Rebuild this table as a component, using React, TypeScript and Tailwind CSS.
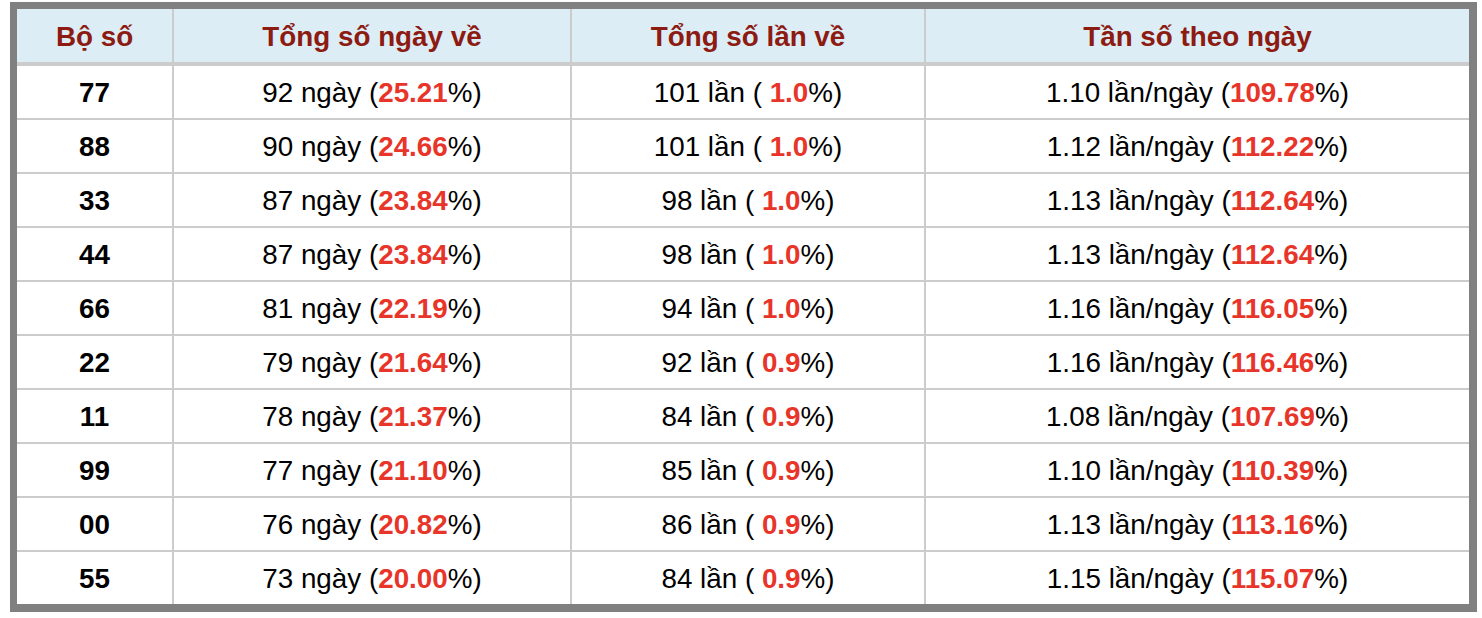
import React from "react";

type Row = {
  bo: string;
  ngay: string;
  ngayPct: string;
  lan: string;
  lanPct: string;
  tan: string;
  tanPct: string;
};

const rows: Row[] = [
  { bo: "77", ngay: "92", ngayPct: "25.21", lan: "101", lanPct: "1.0", tan: "1.10", tanPct: "109.78" },
  { bo: "88", ngay: "90", ngayPct: "24.66", lan: "101", lanPct: "1.0", tan: "1.12", tanPct: "112.22" },
  { bo: "33", ngay: "87", ngayPct: "23.84", lan: "98", lanPct: "1.0", tan: "1.13", tanPct: "112.64" },
  { bo: "44", ngay: "87", ngayPct: "23.84", lan: "98", lanPct: "1.0", tan: "1.13", tanPct: "112.64" },
  { bo: "66", ngay: "81", ngayPct: "22.19", lan: "94", lanPct: "1.0", tan: "1.16", tanPct: "116.05" },
  { bo: "22", ngay: "79", ngayPct: "21.64", lan: "92", lanPct: "0.9", tan: "1.16", tanPct: "116.46" },
  { bo: "11", ngay: "78", ngayPct: "21.37", lan: "84", lanPct: "0.9", tan: "1.08", tanPct: "107.69" },
  { bo: "99", ngay: "77", ngayPct: "21.10", lan: "85", lanPct: "0.9", tan: "1.10", tanPct: "110.39" },
  { bo: "00", ngay: "76", ngayPct: "20.82", lan: "86", lanPct: "0.9", tan: "1.13", tanPct: "113.16" },
  { bo: "55", ngay: "73", ngayPct: "20.00", lan: "84", lanPct: "0.9", tan: "1.15", tanPct: "115.07" },
];

const headers = ["Bộ số", "Tổng số ngày về", "Tổng số lần về", "Tần số theo ngày"];

function Red({ children }: { children: React.ReactNode }) {
  return <b className="font-bold text-[#e8352a]">{children}</b>;
}

export default function App() {
  return (
    <div
      className="bg-white w-[1482px] h-[618px] pt-[2px] pl-[10px]"
      style={{ fontFamily: '"Liberation Sans", Arial, Helvetica, sans-serif' }}
    >
      <div className="inline-block border-l-[7px] border-t-[7px] border-r-[8px] border-b-[8px] border-[#808080]">
        <div className="grid grid-cols-[155px_396px_352px_543px] gap-[2px] bg-[#cccccc] text-[27.8px] leading-none">
          {headers.map((h) => (
            <div
              key={h}
              className="h-[53px] mb-[2px] pt-[2px] bg-[#ddedf6] flex items-center justify-center font-bold text-[#8c1b12]"
            >
              {h}
            </div>
          ))}
          {rows.map((r) => (
            <React.Fragment key={r.bo}>
              <div className="h-[52px] pt-[2px] bg-white flex items-center justify-center font-bold text-black">
                {r.bo}
              </div>
              <div className="h-[52px] pt-[2px] bg-white flex items-center justify-center text-black whitespace-pre">
                {r.ngay} ngày (<Red>{r.ngayPct}</Red>%)
              </div>
              <div className="h-[52px] pt-[2px] bg-white flex items-center justify-center text-black whitespace-pre">
                {r.lan} lần ( <Red>{r.lanPct}</Red>%)
              </div>
              <div className="h-[52px] pt-[2px] bg-white flex items-center justify-center text-black whitespace-pre">
                {r.tan} lần/ngày (<Red>{r.tanPct}</Red>%)
              </div>
            </React.Fragment>
          ))}
        </div>
      </div>
    </div>
  );
}
